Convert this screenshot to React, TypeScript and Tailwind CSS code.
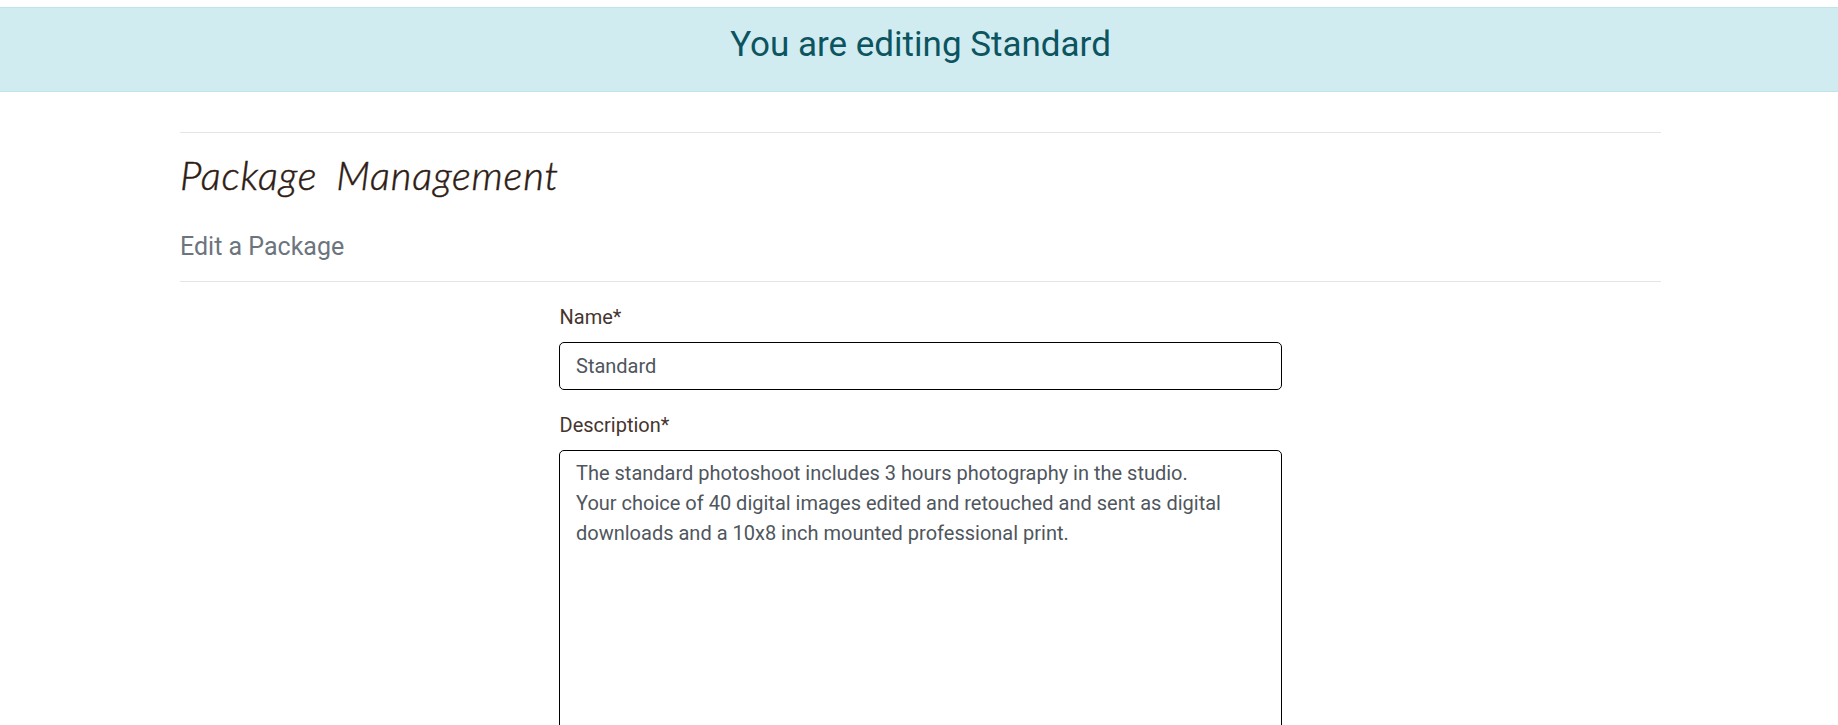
export default function App() {
  return (
    <main className="h-[725px] overflow-hidden bg-white font-['Roboto',sans-serif] text-[#46352f]">
      <div className="mt-[7px] h-[85px] border-y border-[#bee5eb] bg-[#d1ecf1] pt-[16px] pl-[3px] text-center text-[35px] leading-[42px] text-[#0c5460]">You are editing Standard</div>
      <div className="mt-[40px] ml-[180px] w-[1481px] border-t border-black/10">
        <h1 className="mt-[14px] h-[74px] text-[40px] leading-[56px] font-light italic tracking-[0.85px] text-[#2d1b14] [-webkit-text-stroke:0.5px_#2d1b14] [word-spacing:8px] font-['Lato',cursive]">Package Management</h1>
        <h2 className="h-[60px] pt-[11px] text-[25px] leading-[30px] text-[#6c757d]">Edit a Package</h2>
      </div>
      <div className="ml-[180px] w-[1481px] border-t border-black/10" />
      <form className="mt-[20px] ml-[559px] flex w-[723px] flex-col text-[20px] leading-[30px]">
        <label htmlFor="name" className="mb-[10px] pl-[0.5px]">Name*</label>
        <input id="name" className="h-[48px] rounded-[5px] border border-black px-[16px] text-[#4f565d]" defaultValue="Standard" />
        <label htmlFor="description" className="mt-[20px] mb-[10px] pl-[0.5px]">Description*</label>
        <textarea id="description" className="h-[320px] resize-none rounded-[5px] border border-black px-[16px] py-[7px] text-[#4f565d]" defaultValue={"The standard photoshoot includes 3 hours photography in the studio.\nYour choice of 40 digital images edited and retouched and sent as digital downloads and a 10x8 inch mounted professional print."} />
      </form>
    </main>
  );
}
